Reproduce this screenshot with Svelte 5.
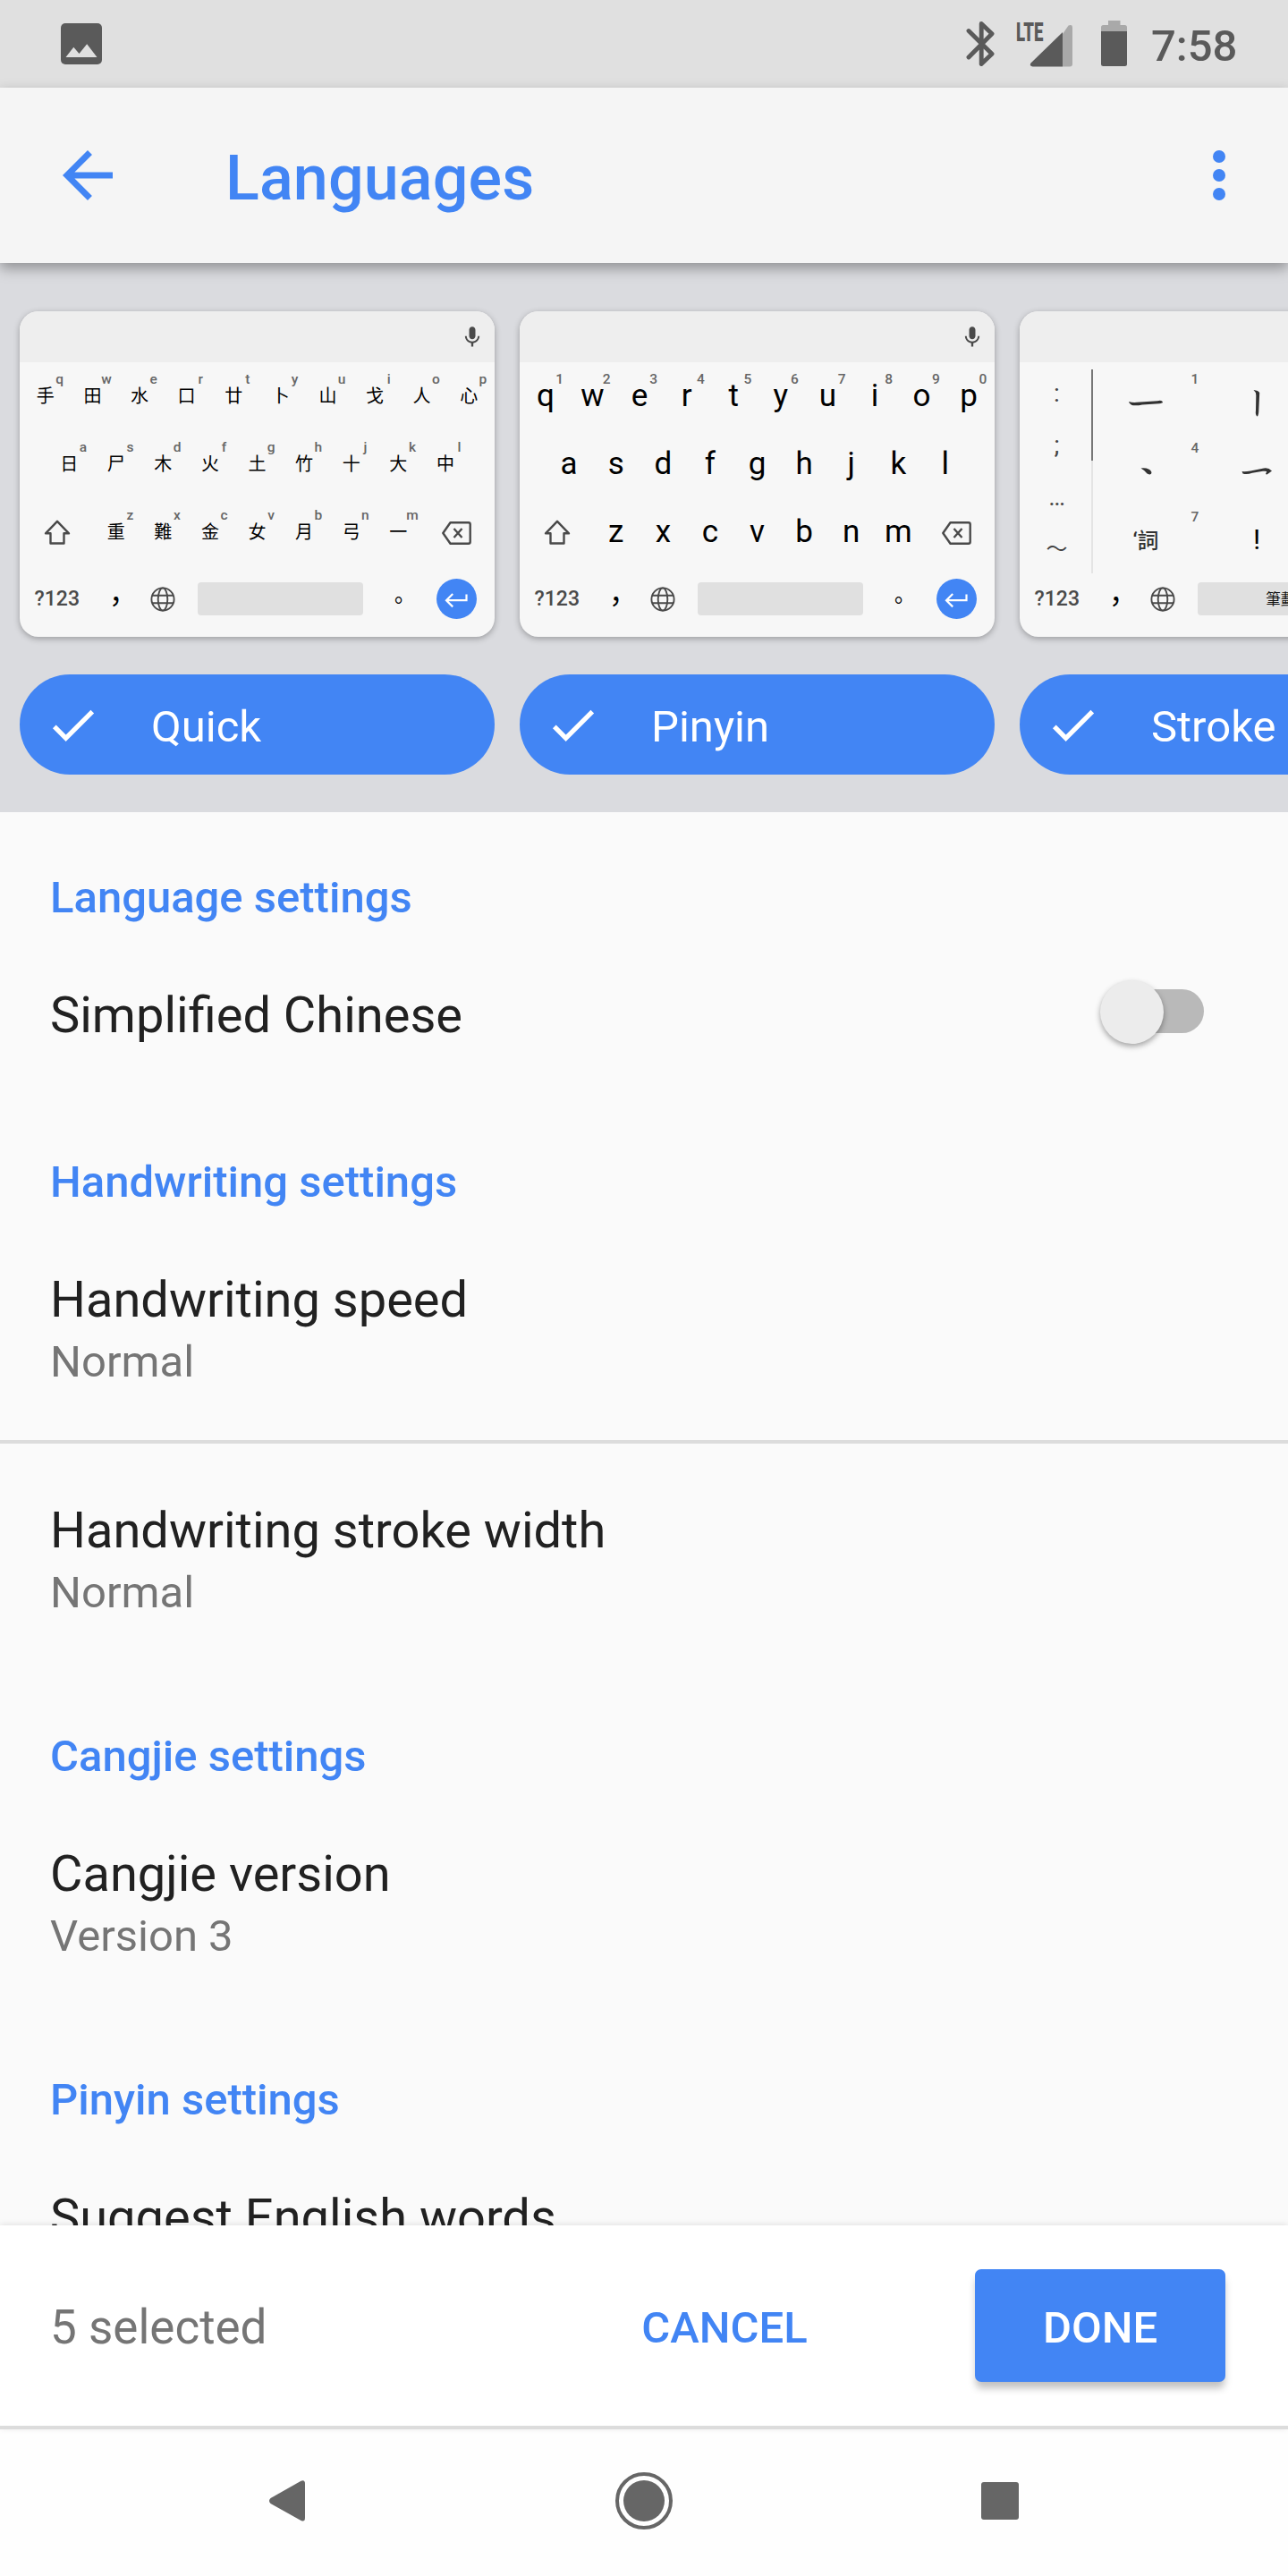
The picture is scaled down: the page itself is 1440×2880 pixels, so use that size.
<script>
  const keyboards = [
    {
      name: 'Quick',
      cjk: true,
      rows: [
        [['手', 'q'], ['田', 'w'], ['水', 'e'], ['口', 'r'], ['廿', 't'], ['卜', 'y'], ['山', 'u'], ['戈', 'i'], ['人', 'o'], ['心', 'p']],
        [['日', 'a'], ['尸', 's'], ['木', 'd'], ['火', 'f'], ['土', 'g'], ['竹', 'h'], ['十', 'j'], ['大', 'k'], ['中', 'l']],
        [['重', 'z'], ['難', 'x'], ['金', 'c'], ['女', 'v'], ['月', 'b'], ['弓', 'n'], ['一', 'm']]
      ]
    },
    {
      name: 'Pinyin',
      cjk: false,
      rows: [
        [['q', '1'], ['w', '2'], ['e', '3'], ['r', '4'], ['t', '5'], ['y', '6'], ['u', '7'], ['i', '8'], ['o', '9'], ['p', '0']],
        [['a'], ['s'], ['d'], ['f'], ['g'], ['h'], ['j'], ['k'], ['l']],
        [['z'], ['x'], ['c'], ['v'], ['b'], ['n'], ['m']]
      ]
    },
    { name: 'Stroke', stroke: true }
  ];

  const sections = [
    { title: 'Language settings', items: [{ title: 'Simplified Chinese', toggle: true }] },
    {
      title: 'Handwriting settings',
      items: [
        { title: 'Handwriting speed', value: 'Normal' },
        { title: 'Handwriting stroke width', value: 'Normal' }
      ]
    },
    { title: 'Cangjie settings', items: [{ title: 'Cangjie version', value: 'Version 3' }] },
    { title: 'Pinyin settings', items: [{ title: 'Suggest English words' }] }
  ];
</script>

{#snippet keys(row, cjk)}
  {#each row as [label, hint]}
    <span class="key" class:cjk>{label}{#if hint}<small>{hint}</small>{/if}</span>
  {/each}
{/snippet}

{#snippet bottomRow(spaceLabel)}
  <div class="row last">
    <span class="wide mode">?123</span>
    <span class="key punct">，</span>
    <span class="key">
      <svg width="28" height="28" viewBox="0 0 28 28" fill="none" stroke="#4a4a4a" stroke-width="1.9">
        <circle cx="14" cy="14" r="12.6" /><ellipse cx="14" cy="14" rx="5.3" ry="12.6" />
        <path d="M2 9.8h24M2 18.2h24" />
      </svg>
    </span>
    <span class="space"><i>{spaceLabel}</i></span>
    <span class="key punct dot">。</span>
    <span class="wide end">
      <svg class="enter" width="45" height="45" viewBox="0 0 45 45">
        <circle cx="22.5" cy="22.5" r="22.5" fill="#4285f4" />
        <path d="M33.5 17.5v6.7H12M18.2 17l-7.2 7.2 7.2 7.2" fill="none" stroke="#fff" stroke-width="2.2" />
      </svg>
    </span>
  </div>
{/snippet}

<div class="screen">
  <header class="status">
    <svg class="photo" width="46" height="46" viewBox="0 0 46 46">
      <rect width="46" height="46" rx="5" fill="#5a5a5a" />
      <path d="M5.5 38 14.3 26.700 20.500 34 29.200 23.300 40.500 38z" fill="#e0e0e0" />
    </svg>
    <svg class="bt" width="32" height="50" viewBox="0 0 32 50" fill="none" stroke="#5a5a5a" stroke-width="4.900" stroke-linejoin="round" stroke-linecap="round">
      <path d="M3 10.500 29 36.200 17.200 47.500V2.500L29 13.800 3 40" />
    </svg>
    <div class="signal">
      <span class="lte">LTE</span>
      <svg width="48" height="48" viewBox="0 0 48 48">
        <path d="M37 11 43.500 1.500Q48 0 48 3.500V44.500Q48 47.500 45 47.500H37z" fill="#a9a9a9" />
        <path d="M37 9V47.500H3.500Q-.5 47 1.500 43.500z" fill="#5a5a5a" />
      </svg>
    </div>
    <svg class="battery" width="29" height="51" viewBox="0 0 29 51">
      <path d="M8 0h13.500v5H26.500q2.500 0 2.500 2.500V12H0V7.500Q0 5 2.500 5H8z" fill="#a9a9a9" />
      <path d="M0 12H29V48.500q0 2.500-2.500 2.500H2.500Q0 51 0 48.500z" fill="#5a5a5a" />
    </svg>
    <span class="clock">7:58</span>
  </header>

  <div class="toolbar">
    <svg width="84" height="84" viewBox="0 0 24 24" fill="#4285f4"><path d="M20 11H7.830l5.590-5.590L12 4l-8 8 8 8 1.410-1.410L7.830 13H20v-2z" /></svg>
    <h1>Languages</h1>
    <svg width="84" height="84" viewBox="0 0 24 24" fill="#4285f4"><circle cx="12" cy="6" r="2" /><circle cx="12" cy="12" r="2" /><circle cx="12" cy="18" r="2" /></svg>
  </div>

  <section class="strip">
    {#each keyboards as kb}
      <article class="layout">
        <div class="keyboard">
          <div class="suggest">
            <svg width="28" height="28" viewBox="0 0 24 24" fill="#4a4a4a"><path d="M12 14c1.660 0 3-1.340 3-3V5c0-1.660-1.340-3-3-3S9 3.340 9 5v6c0 1.660 1.340 3 3 3zm5.300-3c0 3-2.540 5.100-5.300 5.100S6.700 14 6.700 11H5c0 3.410 2.720 6.230 6 6.720V21h2v-3.280c3.280-.48 6-3.300 6-6.720h-1.700z" /></svg>
          </div>
          {#if kb.stroke}
            <div class="stroke-body">
              <div class="marks"><span>:</span><span>;</span><span>…</span><span class="wave">～</span></div>
              <div class="rail"><b></b></div>
              <div class="strokes">
                <span>
                  <svg width="124" height="77" viewBox="0 0 124 77" fill="#333"><path d="M43 39q4 1.300 9 .8L75 38.300Q80 37 81 39.600 81 41 77 41.200L58 42.400Q50 44 46.500 42.900 43 41 43 39z" /></svg>
                  <small>1</small>
                </span>
                <span>
                  <svg width="124" height="77" viewBox="0 0 124 77" fill="#333"><path d="M58.500 26Q64 26.500 65.200 29L64.200 51Q63.300 58 61.300 54 60.500 52 61 48L61.300 32Q61.500 28.500 58.500 26z" /></svg>
                </span>
                <span>
                  <svg width="124" height="77" viewBox="0 0 124 77" fill="#333"><path d="M56.500 36.500Q66 35.500 68.500 41 68.500 45 63.500 42.500 61 39 56.500 36.500z" /></svg>
                  <small>4</small>
                </span>
                <span>
                  <svg width="124" height="77" viewBox="0 0 124 77" fill="#333"><path d="M45.500 40Q49 40.500 55 39.500L70 36.500Q75 35.500 79 39.500 77 41 73.500 43.500 71 43.500 73 41 74 39.300 69 39.800L57 41.800Q51 44 46.500 42.500z" /></svg>
                </span>
                <span class="word">‘詞<small>7</small></span>
                <span class="bang">!</span>
              </div>
            </div>
            {@render bottomRow('筆劃')}
          {:else}
            <div class="row">{@render keys(kb.rows[0], kb.cjk)}</div>
            <div class="row">{@render keys(kb.rows[1], kb.cjk)}</div>
            <div class="row">
              <span class="wide">
                <svg width="30" height="28" viewBox="0 0 30 28" fill="none" stroke="#4a4a4a" stroke-width="2.400" stroke-linejoin="round"><path d="M15 1.800 28 15.300H22.500V26.500H7.500V15.300H2z" /></svg>
              </span>
              {@render keys(kb.rows[2], kb.cjk)}
              <span class="wide end erase">
                <svg width="33" height="26" viewBox="0 0 33 26" fill="none" stroke="#4a4a4a" stroke-width="2.400" stroke-linejoin="round"><path d="M9.500 1.200H29.700Q31.700 1.200 31.700 3.200V22.800Q31.700 24.800 29.700 24.800H9.500L1.300 13zM13.500 8 22.500 18M22.500 8 13.500 18" /></svg>
              </span>
            </div>
            {@render bottomRow('')}
          {/if}
        </div>
        <div class="pill">
          <svg width="63" height="63" viewBox="0 0 24 24" fill="#fff"><path d="M9 16.170 4.830 12l-1.420 1.410L9 19 21 7l-1.410-1.410z" /></svg>
          <span>{kb.name}</span>
        </div>
      </article>
    {/each}
  </section>

  <main>
    {#each sections as section}
      <h2>{section.title}</h2>
      {#each section.items as item}
        <div class="item">
          <div>
            <div class="label">{item.title}</div>
            {#if item.value}<div class="value">{item.value}</div>{/if}
          </div>
          {#if item.toggle}<div class="switch"><i></i></div>{/if}
        </div>
      {/each}
    {/each}
  </main>

  <footer>
    <span class="count">5 selected</span>
    <button class="cancel">CANCEL</button>
    <button class="done">DONE</button>
  </footer>

  <nav>
    <svg width="42" height="46" viewBox="0 0 42 46" fill="#666"><path d="M36.500.8Q41 -1 41 4V42Q41 47 36.500 45L2.500 26Q-.5 23 2.500 20z" /></svg>
    <svg width="64" height="64" viewBox="0 0 64 64"><circle cx="32" cy="32" r="30" fill="none" stroke="#666" stroke-width="4" /><circle cx="32" cy="32" r="23" fill="#666" /></svg>
    <svg width="42" height="42" viewBox="0 0 42 42"><rect width="42" height="42" rx="3" fill="#666" /></svg>
  </nav>
</div>

<style>
  :global(body) { margin: 0; }
  .screen {
    width: 1440px;
    height: 2880px;
    overflow: hidden;
    display: flex;
    flex-direction: column;
    background: #fafafa;
    font-family: Roboto, 'Noto Sans CJK TC', sans-serif;
    color: #212121;
  }
  svg { display: block; flex: none; }
  h1, h2 { margin: 0; font-weight: 500; color: #4285f4; }

  .status {
    flex: none;
    height: 98px;
    box-sizing: border-box;
    padding: 23px 56px 0 68px;
    display: flex;
    align-items: flex-start;
    background: #e0e0e0;
  }
  .photo { margin-top: 3px; }
  .bt { margin: 1px 24px 0 auto; }
  .signal { display: flex; width: 63px; margin: 4px 32px 0 0; position: relative; justify-content: flex-end; }
  .lte {
    position: absolute;
    left: 0;
    top: -6px;
    font-size: 30px;
    line-height: 30px;
    font-weight: 900;
    color: #5a5a5a;
    transform: scaleX(0.62);
    transform-origin: left;
  }
  .clock { margin-left: 27px; width: 97px; font-size: 49px; line-height: 57px; font-weight: 500; color: #5a5a5a; }

  .toolbar {
    flex: none;
    height: 196px;
    box-sizing: border-box;
    padding: 0 35px 0 56px;
    display: flex;
    align-items: center;
    background: #f5f5f5;
    position: relative;
    z-index: 2;
    box-shadow: 0 6px 14px rgba(0, 0, 0, 0.34);
  }
  .toolbar h1 { flex: 1; padding: 6px 0 0 112px; font-size: 70px; line-height: 82px; letter-spacing: 0.15px; }

  .strip {
    flex: none;
    height: 614px;
    box-sizing: border-box;
    padding: 54px 0 0 22px;
    display: flex;
    gap: 28px;
    background: #dadbdf;
    overflow: hidden;
  }
  .layout { flex: none; width: 531px; display: flex; flex-direction: column; gap: 42px; }
  .keyboard {
    height: 364px;
    border-radius: 21px;
    background: #f7f7f7;
    overflow: hidden;
    box-shadow: 0 2px 7px rgba(0, 0, 0, 0.3);
  }
  .suggest { height: 57px; box-sizing: border-box; padding: 15px 11px 0 0; display: flex; justify-content: flex-end; background: #eee; }
  .row { height: 76px; display: flex; align-items: stretch; justify-content: center; }
  .row.last { height: 73px; }
  .key {
    width: 52.6px;
    display: flex;
    align-items: center;
    justify-content: center;
    position: relative;
    font-size: 35px;
    line-height: 40px;
    color: #000;
  }
  .key.cjk { font-size: 20px; }
  .key small, .strokes small {
    position: absolute;
    left: 32px;
    top: 10px;
    width: 20px;
    text-align: center;
    font-size: 15.5px;
    line-height: 18px;
    font-weight: 500;
    color: #666;
  }
  .wide { width: 79px; display: flex; align-items: center; justify-content: center; }
  .wide.end { box-sizing: border-box; padding-right: 1.5px; }
  .wide.erase { padding-top: 2px; }
  .mode { font-size: 23px; font-weight: 500; color: #4a4a4a; }
  .key.punct { font-family: 'Noto Sans CJK TC', sans-serif; font-size: 32px; }
  .key.dot { font-size: 24px; }
  .space { width: 210.6px; display: flex; align-items: center; justify-content: center; }
  .space i {
    width: 185px;
    height: 37px;
    border-radius: 4px;
    background: #e0e0e0;
    font: normal 16.5px/36px 'Noto Sans CJK TC', sans-serif;
    text-align: center;
    color: #111;
  }

  .stroke-body { height: 228px; display: flex; }
  .marks { width: 80px; display: flex; flex-direction: column; padding-top: 6px; box-sizing: border-box; }
  .marks span { height: 58px; line-height: 58px; text-align: center; font-size: 28px; color: #444; padding-left: 3px; }
  .marks .wave { font-size: 24px; }
  .rail { width: 2px; height: 228px; margin-top: 8px; background: #e4e4e4; }
  .rail b { display: block; height: 102px; background: #777; }
  .strokes { display: grid; grid-template-columns: 124px 124px; grid-auto-rows: 77px; margin: 5px 0 0 -3px; }
  .strokes > span { position: relative; display: flex; align-items: center; justify-content: center; }
  .strokes small { left: 107px; top: 5px; }
  .strokes .word { font-size: 24px; font-weight: 500; color: #333; }
  .strokes .bang { font-size: 32px; font-weight: 400; color: #000; }

  .pill {
    height: 112px;
    border-radius: 56px;
    background: #4285f4;
    color: #fff;
    display: flex;
    align-items: center;
    box-sizing: border-box;
    padding-left: 28px;
    gap: 56px;
    font-size: 49px;
    line-height: 57px;
  }
  .pill span { padding-top: 4px; }

  main { flex: 1; min-height: 0; overflow: hidden; }
  h2 { padding: 67px 56px 6px; font-size: 49px; line-height: 57px; }
  .item { padding: 64px 94px 58px 56px; display: flex; justify-content: space-between; }
  .item + .item { border-top: 4px solid #dcdcdc; padding-top: 64px; }
  .label { font-size: 56px; line-height: 66px; }
  .value { margin-top: 8px; font-size: 49px; line-height: 58px; color: #757575; }
  .switch { width: 106px; height: 49px; margin-top: 4px; border-radius: 25px; background: #b9b9b9; display: flex; align-items: center; }
  .switch i {
    flex: none;
    width: 71px;
    height: 71px;
    margin: 2px 0 0 -10px;
    border-radius: 50%;
    background: #ececec;
    box-shadow: 0 3px 6px rgba(0, 0, 0, 0.35);
  }

  footer {
    flex: none;
    height: 228px;
    box-sizing: border-box;
    border-bottom: 4px solid #dcdcdc;
    padding: 0 70px 0 56px;
    display: flex;
    align-items: center;
    background: #fff;
    position: relative;
    box-shadow: 0 -1px 7px rgba(0, 0, 0, 0.1);
  }
  .count { font-size: 53px; line-height: 64px; padding-top: 4px; color: #757575; }
  button { border: 0; font: 500 49px/57px Roboto, sans-serif; text-align: center; }
  .cancel { margin-left: auto; width: 280px; height: 126px; padding: 4px 0 0; background: none; color: #4285f4; }
  .done { margin-left: 140px; width: 280px; height: 126px; padding: 4px 0 0; border-radius: 7px; background: #4285f4; color: #fff; box-shadow: 0 8px 8px -1px rgba(0, 0, 0, 0.25); }

  nav {
    flex: none;
    height: 164px;
    box-sizing: border-box;
    padding: 0 301px 5px 300px;
    display: flex;
    align-items: center;
    justify-content: space-between;
    background: #fefefe;
  }
</style>
